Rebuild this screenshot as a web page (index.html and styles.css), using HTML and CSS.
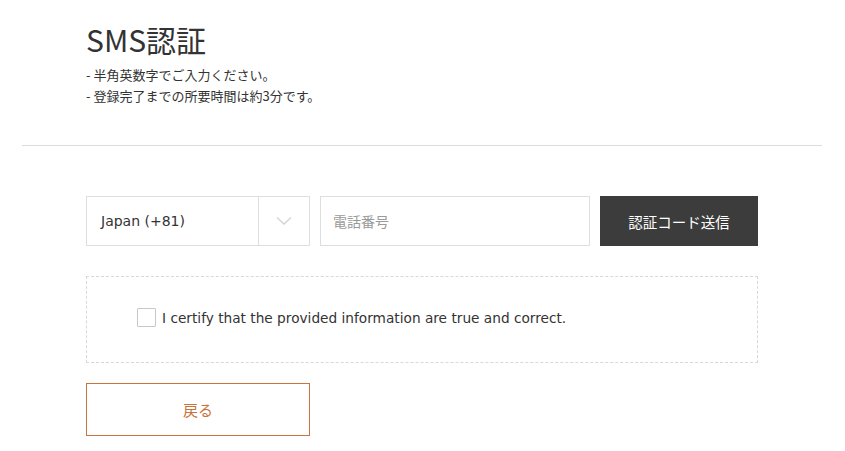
FILE: index.html
```html
<!DOCTYPE html>
<html lang="ja">
<head>
<meta charset="utf-8">
<link rel="stylesheet" href="styles.css">
</head>
<body>
<div class="page">
  <header class="head">
    <h1 class="title">SMS認証</h1>
    <p class="note">- 半角英数字でご入力ください。</p>
    <p class="note">- 登録完了までの所要時間は約3分です。</p>
  </header>
  <div class="rule"></div>
  <main class="form">
    <div class="row">
      <div class="select">
        <span class="select-text">Japan (+81)</span>
        <span class="select-arrow">
          <svg width="16" height="10" viewBox="0 0 16 10"><path d="M1 1.5 L8 8 L15 1.5" fill="none" stroke="#d4d4d4" stroke-width="1.4"/></svg>
        </span>
      </div>
      <div class="phone">電話番号</div>
      <button class="send">認証コード送信</button>
    </div>
    <div class="certify">
      <span class="check"></span>
      <span class="certify-text">I certify that the provided information are true and correct.</span>
    </div>
    <button class="back">戻る</button>
  </main>
</div>
</body>
</html>
```

FILE: styles.css
```css
html, body {
  margin: 0;
  padding: 0;
  background: #fff;
}
body {
  font-family: "Noto Sans CJK JP", "Noto Sans", sans-serif;
  color: #333;
}
.page {
  width: 845px;
}
.head {
  padding: 19px 0 0 86px;
  height: 124px;
  box-sizing: border-box;
}
.title {
  margin: 0;
  font-size: 30px;
  font-weight: 400;
  line-height: 40px;
  color: #333;
}
.note {
  margin: 0;
  font-size: 13px;
  line-height: 21px;
  color: #333;
}
.note:first-of-type {
  margin-top: 5px;
}
.rule {
  margin: 21px 0 0 22px;
  width: 800px;
  height: 1px;
  background: #dcdcdc;
}
.form {
  padding: 50px 0 0 86px;
  width: 672px;
  display: flex;
  flex-direction: column;
}
.row {
  display: flex;
  height: 50px;
}
.select {
  width: 224px;
  box-sizing: border-box;
  border: 1px solid #dedede;
  display: flex;
  align-items: center;
}
.select-text {
  flex: 1;
  padding-left: 14px;
  font-family: "DejaVu Sans", sans-serif;
  font-size: 14px;
  color: #333;
}
.select-arrow {
  width: 50px;
  height: 100%;
  border-left: 1px solid #dedede;
  display: flex;
  align-items: center;
  justify-content: center;
}
.phone {
  margin-left: 10px;
  width: 270px;
  box-sizing: border-box;
  border: 1px solid #dedede;
  display: flex;
  align-items: center;
  padding-left: 12px;
  font-size: 14px;
  color: #9a9a9a;
}
.send {
  margin-left: 10px;
  width: 158px;
  border: 0;
  background: #3c3c3c;
  color: #fff;
  font-family: "Noto Sans CJK JP", sans-serif;
  font-size: 14.5px;
  padding: 0;
}
.certify {
  margin-top: 30px;
  height: 87px;
  box-sizing: border-box;
  border: 1px dashed #d8d8d8;
  display: flex;
  align-items: center;
  padding-left: 50px;
  padding-bottom: 4px;
}
.check {
  width: 19px;
  height: 19px;
  box-sizing: border-box;
  border: 1px solid #c8c8c8;
  border-radius: 1px;
  margin-right: 6px;
}
.certify-text {
  font-family: "DejaVu Sans", sans-serif;
  font-size: 13.7px;
  color: #333;
}
.back {
  margin-top: 20px;
  width: 224px;
  height: 53px;
  box-sizing: border-box;
  border: 1px solid #c8743c;
  background: #fff;
  color: #c8743c;
  font-family: "Noto Sans CJK JP", sans-serif;
  font-size: 15px;
  padding: 0;
}
```
